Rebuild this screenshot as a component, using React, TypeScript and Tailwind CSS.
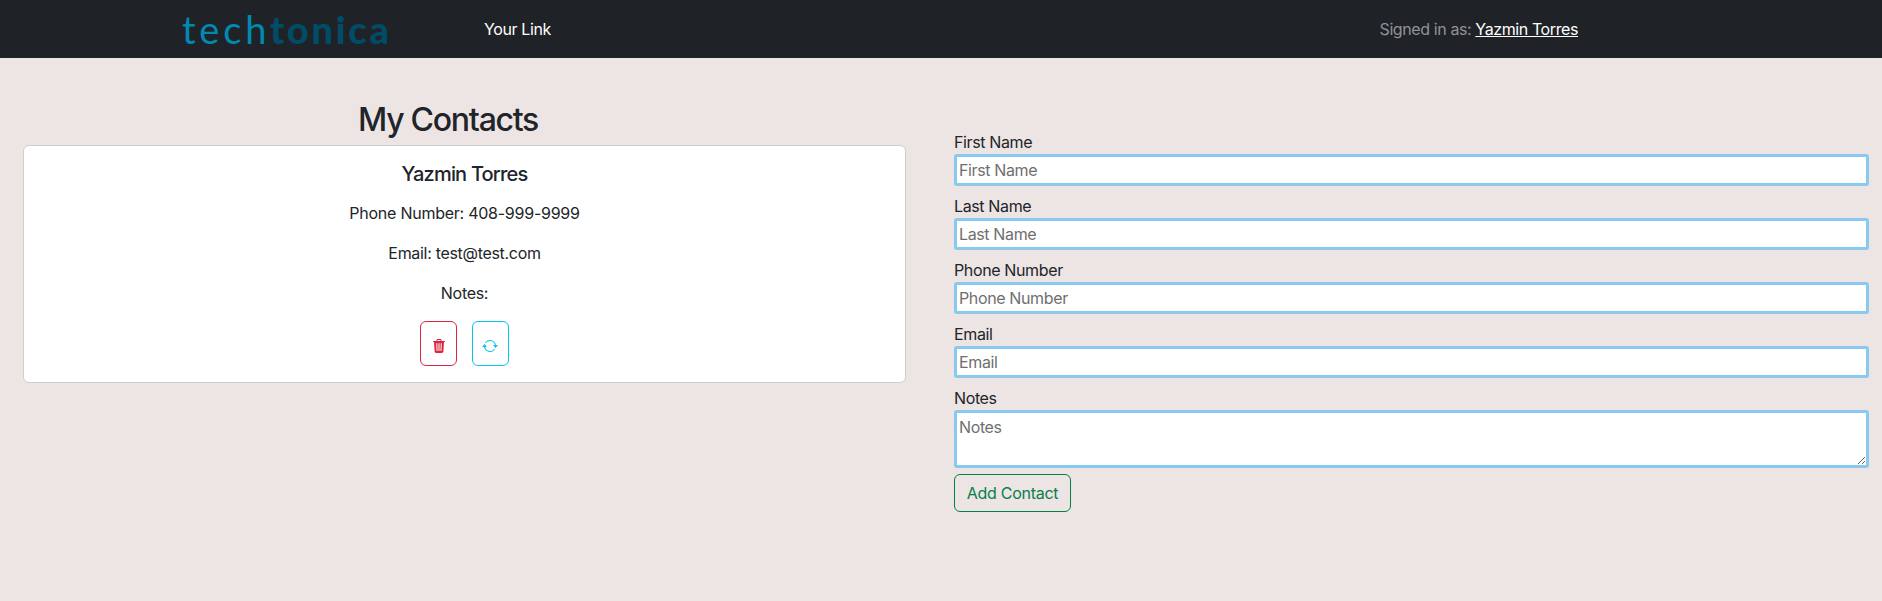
import { BsArrowRepeat } from "react-icons/bs";
import { IoTrash } from "react-icons/io5";

const fields = ["First Name", "Last Name", "Phone Number", "Email"];

function Navbar() {
  return (
    <nav className="flex h-[58px] items-center bg-[#1f2327] pr-[304px] pl-[182px]">
      <a
        href="#"
        className="flex w-[302px] items-center font-['Lato',sans-serif] text-[38px] leading-[58px]"
      >
        <span className="w-[88px] tracking-[3.8px] text-[#0089b2]">tech</span>
        <span className="font-black tracking-[2.7px] text-[#004c66]">tonica</span>
      </a>
      <a href="#" className="tracking-[-0.38px] text-white">
        Your Link
      </a>
      <p className="ml-auto tracking-[-0.4px] text-[#909294]">
        Signed in as:{" "}
        <a href="#" className="text-white underline">
          Yazmin Torres
        </a>
      </p>
    </nav>
  );
}

function ContactCard() {
  return (
    <article className="flex flex-col items-center gap-4 rounded-md border border-[#cfcdcf] bg-white p-4 text-center">
      <h2 className="-mb-px text-xl leading-6 font-medium tracking-[-0.8px]">Yazmin Torres</h2>
      <p className="tracking-[-0.25px]">Phone Number: 408-999-9999</p>
      <p className="tracking-[-0.31px]">Email: test@test.com</p>
      <p className="tracking-[-0.3px]">Notes:</p>
      <div className="flex gap-[15px]">
        <button
          aria-label="Delete"
          className="flex h-[45px] w-[37px] items-center justify-center rounded-md border border-[#dc2640] pt-[5px] text-[#dc2640]"
        >
          <IoTrash />
        </button>
        <button
          aria-label="Update"
          className="flex h-[45px] w-[37px] items-center justify-center rounded-md border border-[#06c4ec] pt-[5px] pr-px text-[#06c4ec]"
        >
          <BsArrowRepeat />
        </button>
      </div>
    </article>
  );
}

function ContactForm() {
  return (
    <form className="flex w-[915px] flex-col items-start pt-[72px] tracking-[-0.37px]">
      {fields.map((name) => (
        <label key={name} className="mb-2 block w-full">
          {name}
          <input
            placeholder={name}
            className="block h-8 w-full rounded-[3px] border-3 border-[#87c9ef] bg-white px-0.5 placeholder:text-[#6f6f6f]"
          />
        </label>
      ))}
      <label className="block w-full">
        Notes
        <textarea
          placeholder="Notes"
          className="block h-[58px] w-full resize rounded-[3px] border-3 border-[#87c9ef] bg-white p-0.5 placeholder:text-[#6f6f6f]"
        />
      </label>
      <button className="mt-1.5 h-[38px] w-[117px] rounded-md border border-[#04804b] text-center tracking-[-0.28px] text-[#04804b]">
        Add Contact
      </button>
    </form>
  );
}

export default function App() {
  return (
    <div className="min-h-screen bg-[#ede4e4] font-['Inter',sans-serif] text-base text-[#212529]">
      <Navbar />
      <main className="flex gap-12 pl-[23px]">
        <section className="w-[883px] pt-[43px]">
          <h1 className="mb-[7px] pl-[335px] text-[32px] leading-[37px] font-medium tracking-[-1.26px]">
            My Contacts
          </h1>
          <ContactCard />
        </section>
        <ContactForm />
      </main>
    </div>
  );
}
